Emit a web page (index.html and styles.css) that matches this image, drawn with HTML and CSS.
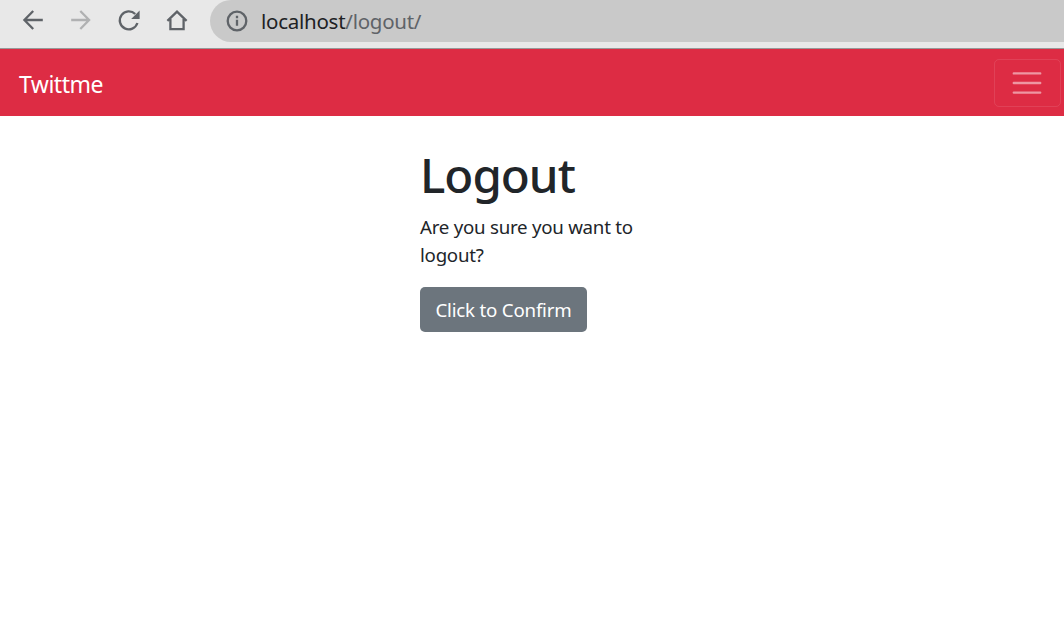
FILE: index.html
```
<!DOCTYPE html>
<html lang="en">

<head>
    <meta charset="UTF-8">
    <meta name="viewport" content="width=device-width, initial-scale=1.0">
    <title>Logout</title>
    <link rel="stylesheet" href="styles.css">
</head>

<body>
    <div class="toolbar">
        <div class="toolbar-icons">
            <svg width="24" height="24" viewBox="0 0 24 24" class="icon">
                <path d="M21.8 12H3.6M12.2 3L3.4 12l8.8 9" />
            </svg>
            <svg width="24" height="24" viewBox="0 0 24 24" class="icon disabled">
                <path d="M2.2 12h18M11.3 3l8.8 9-8.8 9" />
            </svg>
            <svg width="24" height="24" viewBox="0 0 24 24" class="icon">
                <path d="M20.4 15A9 9 0 1 1 18.2 6" />
                <path class="solid" d="M22.6 2.6v8.4h-8.4z" />
            </svg>
            <svg width="24" height="24" viewBox="0 0 24 24" class="icon">
                <path d="M2.4 12.9L12 3.6l9.6 9.3M5.4 11v10.1h13.2V11" />
            </svg>
        </div>
        <div class="address">
            <svg width="22" height="22" viewBox="0 0 22 22" class="icon info">
                <circle cx="11" cy="11" r="9.3" />
                <path d="M11 9.8v6M11 5.8v2.4" />
            </svg>
            <span class="url">localhost<span class="path">/logout/</span></span>
        </div>
    </div>

    <nav class="navbar">
        <a class="navbar-brand">Twittme</a>
        <button class="navbar-toggler" type="button" aria-label="Toggle navigation">
            <svg width="36" height="36" viewBox="0 0 30 30">
                <path d="M4 7h22M4 15h22M4 23h22" />
            </svg>
        </button>
    </nav>

    <div class="container">
        <form class="logout">
            <h1>Logout</h1>
            <p>Are you sure you want to logout?</p>
            <button class="btn" type="button">Click to Confirm</button>
        </form>
    </div>
</body>

</html>
```
FILE: styles.css
```
* {
    box-sizing: border-box;
}

body {
    margin: 0;
    font-family: "Noto Sans", "Open Sans", sans-serif;
    font-size: 18.7px;
    color: #212529;
    background-color: #fff;
}

.toolbar {
    height: 49px;
    display: flex;
    align-items: flex-start;
    background-color: #e8e8e8;
    border-bottom: 1px solid #989898;
}

.toolbar-icons {
    width: 210px;
    padding: 8px 0 0 21px;
    display: flex;
    gap: 24px;
}

.icon {
    fill: none;
    stroke: #5f6368;
    stroke-width: 2.3;
    flex: none;
}

.disabled {
    stroke: #b0b1b2;
}

.solid {
    fill: #5f6368;
    stroke: none;
}

.address {
    flex: 1;
    height: 42px;
    padding-left: 16px;
    display: flex;
    align-items: center;
    background-color: #c9c9c9;
    border-radius: 21px 0 0 21px;
}

.url {
    margin-left: 13px;
    font-size: 20.5px;
    letter-spacing: -0.26px;
    color: #202124;
}

.path {
    color: #5f6368;
}

.navbar {
    height: 67px;
    padding: 0 3px 0 19px;
    display: flex;
    align-items: center;
    justify-content: space-between;
    background-color: #dd2c44;
}

.navbar-brand {
    padding-top: 2px;
    font-size: 23px;
    letter-spacing: -0.5px;
    color: #fff;
}

.navbar-toggler {
    width: 67px;
    height: 48px;
    padding: 0 2px 0 0;
    display: flex;
    align-items: center;
    justify-content: center;
    background: none;
    border: 1px solid rgba(255, 255, 255, 0.1);
    border-radius: 5px;
}

.navbar-toggler path {
    fill: none;
    stroke: rgba(255, 255, 255, 0.5);
    stroke-width: 2;
    stroke-linecap: round;
}

.container {
    display: flex;
    justify-content: center;
    padding-top: 30px;
}

.logout {
    width: 224px;
}

h1 {
    margin: 0 0 10px;
    font-size: 47.5px;
    font-weight: 500;
    line-height: 57px;
    letter-spacing: -1px;
}

p {
    margin: 0 0 18px;
    line-height: 28px;
    letter-spacing: -0.25px;
}

.btn {
    width: 167px;
    height: 45px;
    padding: 0;
    font-family: inherit;
    font-size: 18.7px;
    letter-spacing: -0.2px;
    color: #fff;
    background-color: #6c757d;
    border: none;
    border-radius: 5px;
}
```
